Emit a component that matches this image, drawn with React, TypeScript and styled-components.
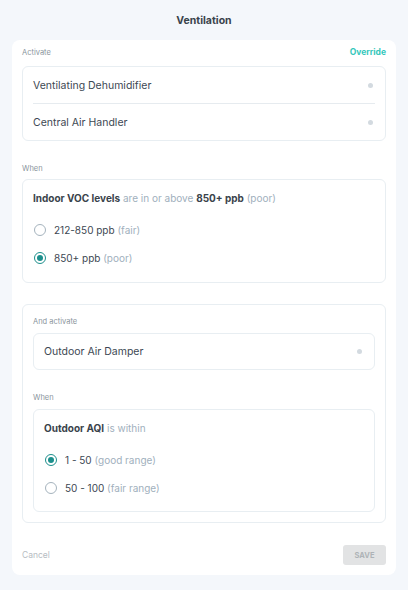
import React from "react"
import styled, { createGlobalStyle } from "styled-components"

const GlobalStyle = createGlobalStyle`
  html, body {
    margin: 0;
    padding: 0;
    background: #f4f7fb;
    font-family: Inter, "Noto Sans", sans-serif;
    color: #3d4853;
  }
`

const Page = styled.div`
  width: 408px;
  min-height: 590px;
  display: flex;
  flex-direction: column;
  box-sizing: border-box;
  padding: 0 12px 15px;
`

const Title = styled.h1`
  margin: 0;
  height: 40px;
  display: flex;
  align-items: center;
  justify-content: center;
  font-size: 10.5px;
  font-weight: 700;
  color: #3a434b;
`

const Card = styled.div`
  background: #fff;
  border-radius: 8px;
  padding: 6px 10px 10px;
  display: flex;
  flex-direction: column;
`

const LabelRow = styled.div<{ $mb: number; $mt?: number }>`
  display: flex;
  align-items: center;
  justify-content: space-between;
  height: 12px;
  margin-top: ${(p) => p.$mt ?? 0}px;
  margin-bottom: ${(p) => p.$mb}px;
`

const Label = styled.span`
  font-size: 7.5px;
  color: #8b959d;
`

const Override = styled.span`
  font-size: 8.5px;
  font-weight: 700;
  color: #35c7bb;
`

const Box = styled.div<{ $pad?: string; $mt?: number }>`
  border: 1px solid #e8eef2;
  border-radius: 6px;
  padding: ${(p) => p.$pad ?? "0 10px"};
  margin-top: ${(p) => p.$mt ?? 0}px;
  display: flex;
  flex-direction: column;
`

const DeviceRow = styled.div<{ $h: number; $divider?: boolean }>`
  height: ${(p) => p.$h}px;
  display: flex;
  align-items: center;
  justify-content: space-between;
  font-size: 10.5px;
  color: #3d4853;
  border-bottom: ${(p) => (p.$divider ? "1px solid #e6ebef" : "none")};
`

const Dot = styled.span`
  width: 5px;
  height: 5px;
  border-radius: 50%;
  background: #d3dae0;
  margin-right: 2px;
`

const Heading = styled.div`
  height: 14px;
  line-height: 14px;
  font-size: 10px;
  color: #9fb0bd;
  margin-bottom: 15px;

  b {
    color: #3a434b;
    font-weight: 700;
  }
`

const Options = styled.div`
  display: flex;
  flex-direction: column;
  gap: 8px;
`

const Option = styled.label`
  height: 20px;
  display: flex;
  align-items: center;
  gap: 8px;
  font-size: 10px;
  color: #3d4853;
`

const OptionText = styled.span`
  em {
    font-style: normal;
    color: #9fb0bd;
  }
`

const Radio = styled.span<{ $on?: boolean }>`
  width: 12px;
  height: 12px;
  box-sizing: border-box;
  border-radius: 50%;
  border: 1.5px solid ${(p) => (p.$on ? "#1c8f8c" : "#a5b3bd")};
  display: flex;
  align-items: center;
  justify-content: center;
  margin-left: 1px;

  &::after {
    content: "";
    width: 6px;
    height: 6px;
    border-radius: 50%;
    background: ${(p) => (p.$on ? "#1c8f8c" : "transparent")};
  }
`

const Footer = styled.div`
  margin-top: 22px;
  display: flex;
  align-items: center;
  justify-content: space-between;
`

const Cancel = styled.span`
  font-size: 8.5px;
  color: #b6bcc2;
`

const SaveButton = styled.button`
  width: 43px;
  height: 20px;
  border: none;
  border-radius: 3px;
  background: #e2e3e4;
  color: #aeb3b7;
  font-family: inherit;
  font-size: 7.5px;
  font-weight: 700;
  padding: 0;
`

export default function App() {
  return (
    <>
      <GlobalStyle />
      <Page>
        <Title>Ventilation</Title>
        <Card>
          <LabelRow $mb={8}>
            <Label>Activate</Label>
            <Override>Override</Override>
          </LabelRow>
          <Box>
            <DeviceRow $h={36} $divider>
              Ventilating Dehumidifier
              <Dot />
            </DeviceRow>
            <DeviceRow $h={36}>
              Central Air Handler
              <Dot />
            </DeviceRow>
          </Box>

          <LabelRow $mt={21} $mb={5}>
            <Label>When</Label>
          </LabelRow>
          <Box $pad="11px 10px 14px">
            <Heading>
              <b>Indoor VOC levels</b> are in or above <b>850+ ppb</b> (poor)
            </Heading>
            <Options>
              <Option>
                <Radio />
                <OptionText>
                  212-850 ppb <em>(fair)</em>
                </OptionText>
              </Option>
              <Option>
                <Radio $on />
                <OptionText>
                  850+ ppb <em>(poor)</em>
                </OptionText>
              </Option>
            </Options>
          </Box>

          <Box $pad="10px 10px 10px" $mt={21}>
            <LabelRow $mb={6}>
              <Label>And activate</Label>
            </LabelRow>
            <Box>
              <DeviceRow $h={35}>
                Outdoor Air Damper
                <Dot />
              </DeviceRow>
            </Box>
            <LabelRow $mt={21} $mb={6}>
              <Label>When</Label>
            </LabelRow>
            <Box $pad="11px 10px 13px">
              <Heading>
                <b>Outdoor AQI</b> is within
              </Heading>
              <Options>
                <Option>
                  <Radio $on />
                  <OptionText>
                    1 - 50 <em>(good range)</em>
                  </OptionText>
                </Option>
                <Option>
                  <Radio />
                  <OptionText>
                    50 - 100 <em>(fair range)</em>
                  </OptionText>
                </Option>
              </Options>
            </Box>
          </Box>

          <Footer>
            <Cancel>Cancel</Cancel>
            <SaveButton>SAVE</SaveButton>
          </Footer>
        </Card>
      </Page>
    </>
  )
}
